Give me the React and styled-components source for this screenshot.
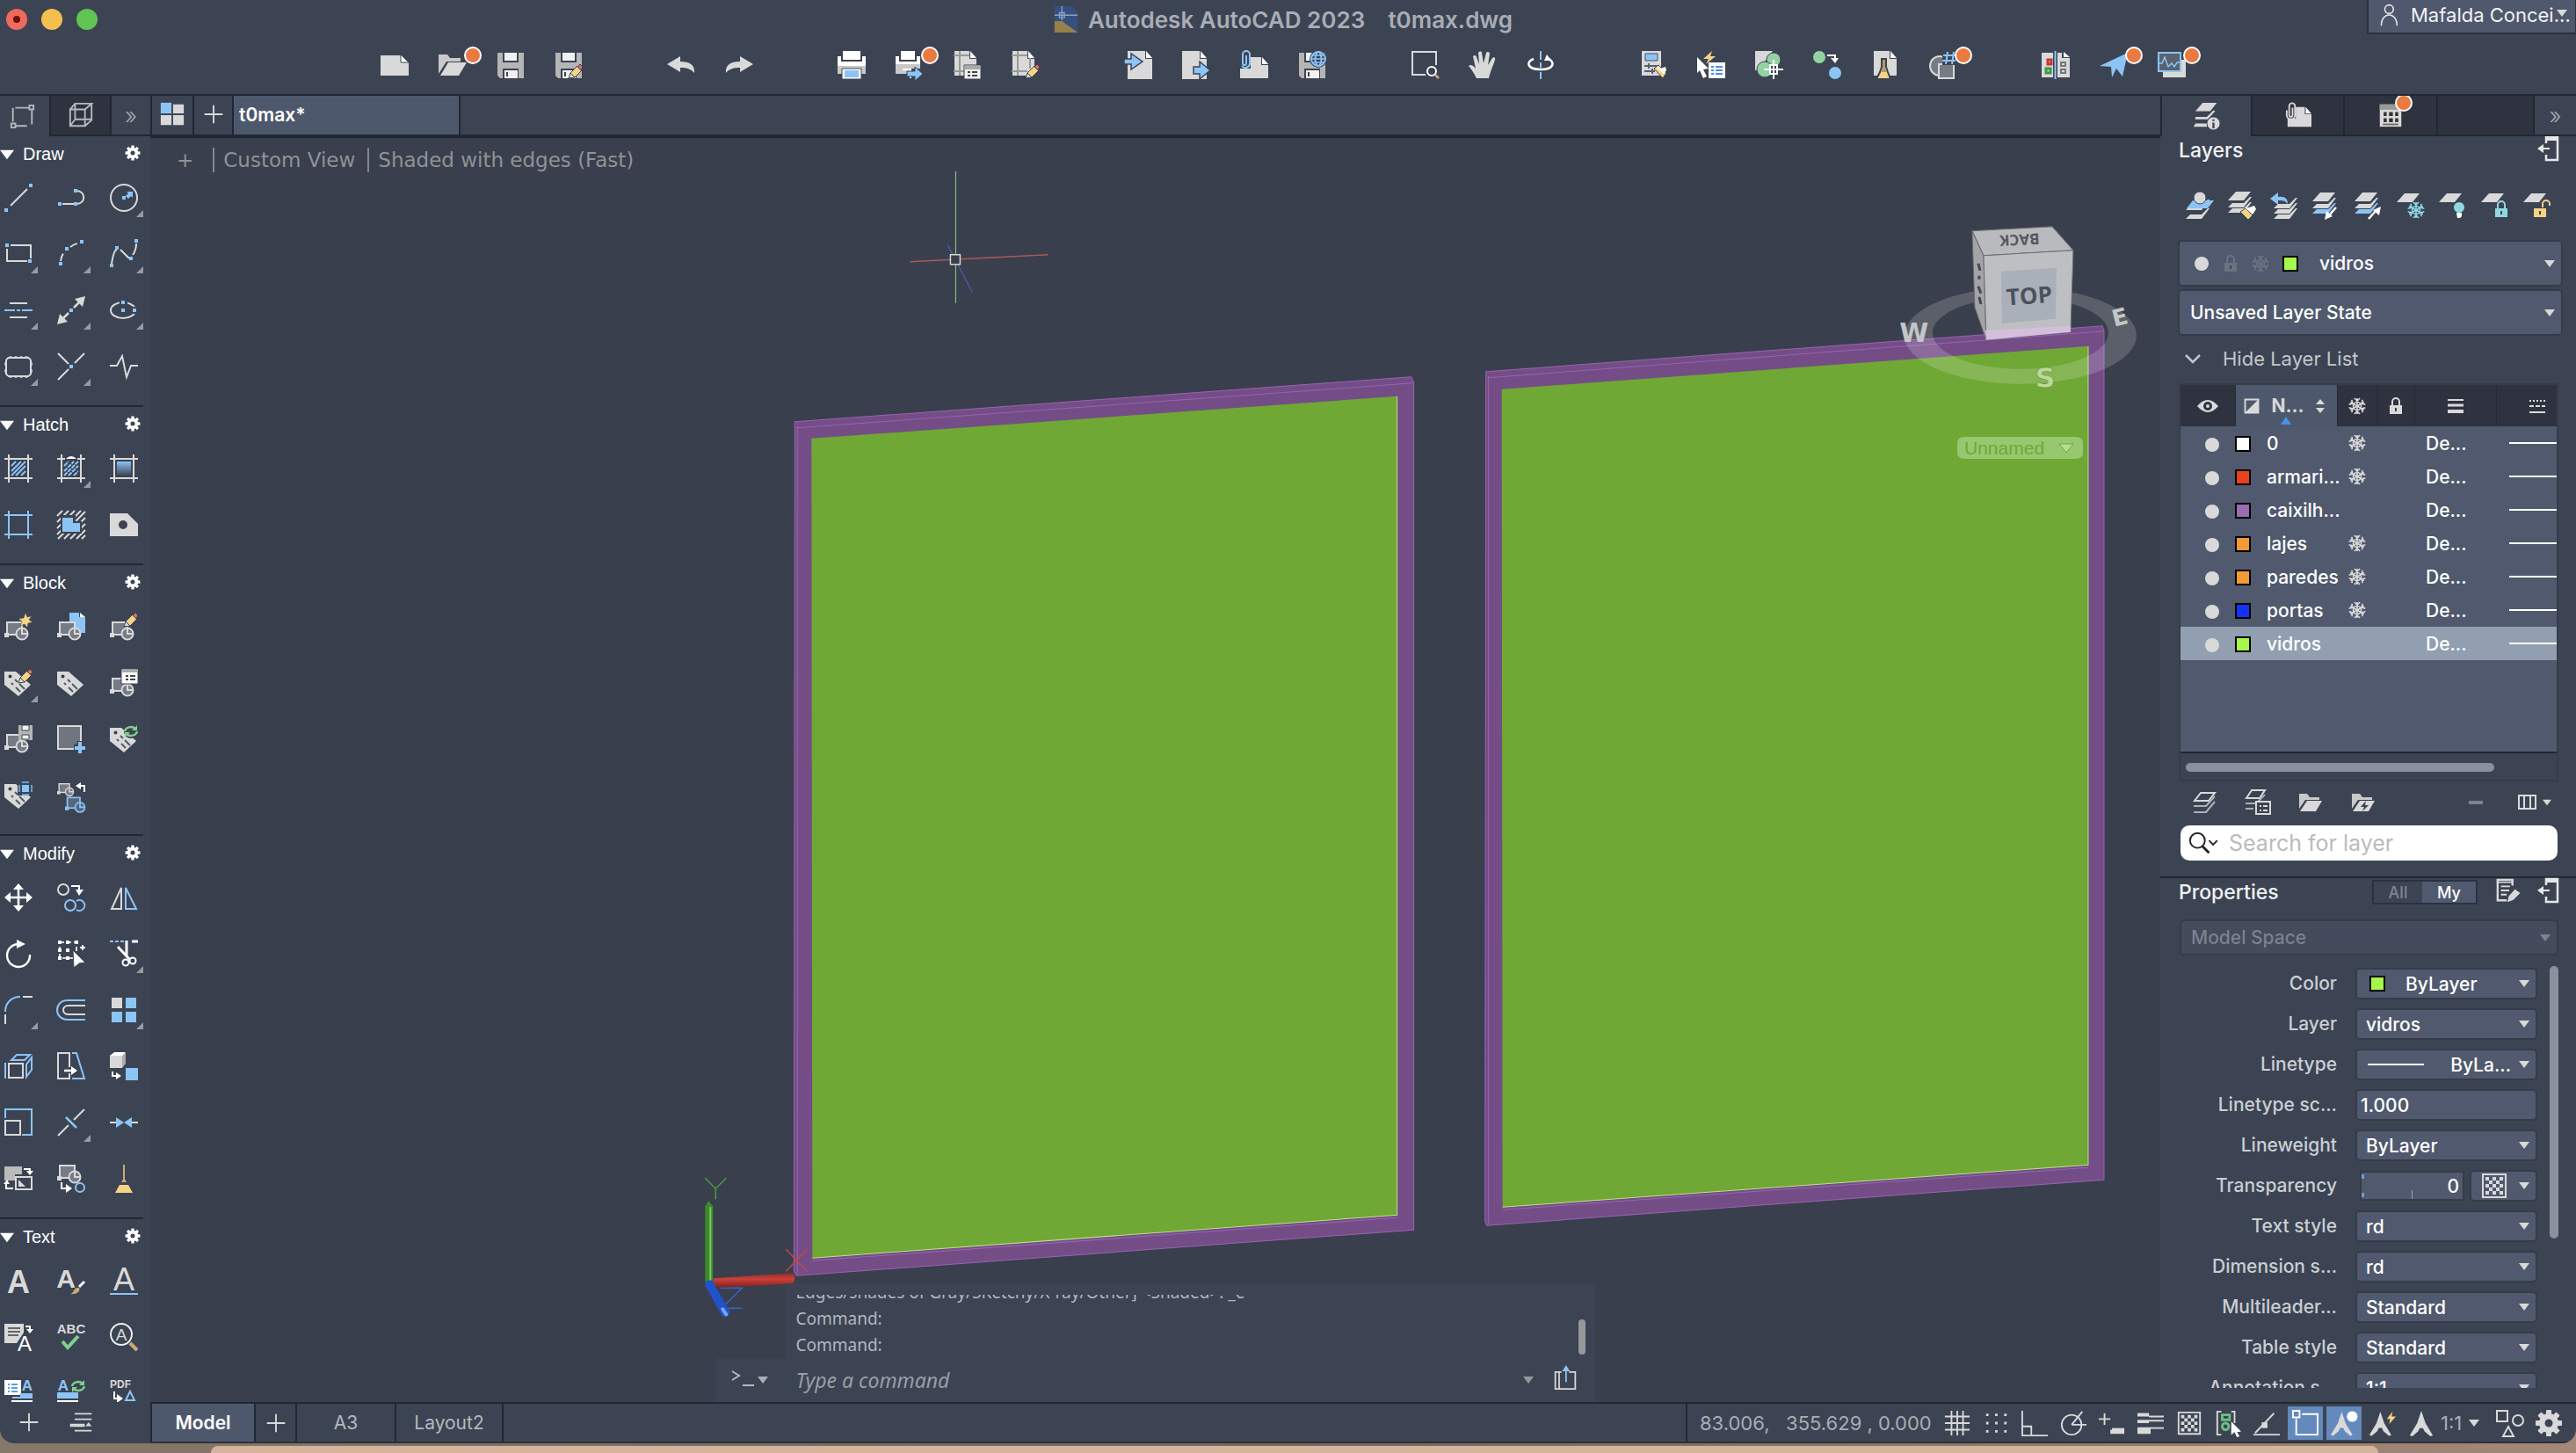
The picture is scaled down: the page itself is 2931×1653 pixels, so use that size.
import { useState } from "react";
import styled, { createGlobalStyle, css } from "styled-components";

const G = "#d9d9d9";
const B = "#8cc4f6";
const Y = "#f5d384";
const T = "#8fd8e0";
const GREEN = "#93d3a2";
const DIM = "#6b7280";
const BG = "#3c4453";
const LINE = "#202834";
const DARK = "#2f333f";
const FIELD = "#50596d";

const GlobalStyle = createGlobalStyle`
  * { box-sizing: border-box; }
  body {
    margin: 0;
    background: #7d6b5d;
    font-family: "Inter", "Liberation Sans", sans-serif;
    font-size: 21px;
    color: #f0f1f3;
  }
  button, select, input { font: inherit; color: inherit; margin: 0; }
  button { border: 0; padding: 0; background: none; cursor: pointer; }
  h1, h2, h3 { margin: 0; font-weight: 500; }
`;

const Desktop = styled.div`
  height: 100vh;
  display: flex;
  flex-direction: column;
  background: linear-gradient(90deg, #86786a, #7a675a 50%, #a38877);
`;

const Window = styled.div`
  flex: 1;
  min-height: 0;
  display: flex;
  flex-direction: column;
  background: ${BG};
  border-radius: 0 0 16px 16px;
  overflow: hidden;
`;

const DockEdge = styled.div`
  height: 8px;
  margin: 3px 225px 0 240px;
  border-radius: 16px 16px 0 0;
  background: #d5b49c;
`;

const TitleBar = styled.header`
  height: 44px;
  display: grid;
  grid-template-columns: 1fr auto 1fr;
  align-items: center;
`;

const Lights = styled.div`
  display: flex;
  gap: 16px;
  padding-left: 7px;
`;

const Light = styled.button`
  width: 24px;
  height: 24px;
  border-radius: 50%;
  display: grid;
  place-items: center;
  background: ${(props) => props.$color};

  &::after {
    content: "";
    width: 8px;
    height: 8px;
    border-radius: 50%;
    background: ${(props) => (props.$edited ? "#6d0f09" : "transparent")};
  }
`;

const Title = styled.h1`
  display: flex;
  align-items: center;
  gap: 10px;
  padding-right: 12px;
  font-size: 26px;
  font-weight: 600;
  white-space: pre;
  color: #a9adb5;
`;

const User = styled.button`
  position: relative;
  justify-self: end;
  align-self: start;
  height: 39px;
  width: 238px;
  padding: 0 2px 4px 12px;
  display: flex;
  align-items: center;
  gap: 14px;
  border: solid #2a313e;
  border-width: 0 1px 2px 2px;
  background: #4f586c;
  font-size: 22px;
  white-space: nowrap;
`;

const UserArrow = styled.span`
  position: absolute;
  top: 0;
  right: 9px;
`;

const Toolbar = styled.nav`
  height: 63px;
  padding: 0 12px 3px 0;
  display: flex;
  align-items: center;
  justify-content: center;
  gap: 62px;
`;

const ToolGroup = styled.div`
  display: flex;
`;

const ToolButton = styled.button`
  position: relative;
  width: 66px;
  height: 44px;
  display: grid;
  place-items: center;
`;

const Badge = styled.span`
  position: absolute;
  top: ${(props) => props.$top}px;
  left: 50%;
  margin-left: ${(props) => props.$shift}px;
  width: 20px;
  height: 20px;
  border-radius: 50%;
  border: 2px solid #fff;
  background: #ea7a41;
`;

const Body = styled.div`
  flex: 1;
  min-height: 0;
  display: flex;
  border-top: 2px solid ${LINE};
`;

const Rest = styled.div`
  flex: 1;
  min-width: 0;
  display: flex;
  flex-direction: column;
`;

const Work = styled.main`
  flex: 1;
  min-height: 0;
  display: flex;
`;

const ToolSets = styled.aside`
  width: 171px;
  flex: none;
  display: flex;
  flex-direction: column;
`;

const Tabs = styled.div`
  height: 46px;
  flex: none;
  display: flex;
`;

const Tab = styled.button`
  position: relative;
  display: grid;
  place-items: center;
  width: ${(props) => props.$width}px;
  padding-right: ${(props) => (props.$first ? 6 : 0)}px;
  border-left: ${(props) => (props.$first ? 0 : 2)}px solid ${LINE};
  border-bottom: ${(props) => (props.$active ? 0 : 2)}px solid ${LINE};
  background: ${(props) => (props.$dark ? DARK : "transparent")};
  font-size: 26px;
  font-weight: 300;
  color: #a4a8b0;
`;

const SetList = styled.div`
  flex: 1;
  min-height: 0;
  overflow: hidden;
`;

const SetSection = styled.section`
  width: 163px;
  padding-bottom: 12px;
  border-bottom: 2px solid ${LINE};
`;

const SetHeader = styled.div`
  height: 38px;
  padding: 3px 3px 0 0;
  display: flex;
  align-items: center;

  h2 {
    flex: 1;
    padding-left: 10px;
    font: 400 20px "Liberation Sans", sans-serif;
    color: #fff;
  }
`;

const SetGrid = styled.div`
  padding-left: 5px;
  display: grid;
  grid-template-columns: repeat(3, 32px);
  grid-auto-rows: 64px;
  column-gap: 28px;
`;

const SetTool = styled.button`
  position: relative;
  display: grid;
  place-items: center;

  ${(props) =>
    props.$more &&
    css`
      &::after {
        content: "";
        position: absolute;
        right: -6px;
        bottom: 10px;
        border: 4px solid #989ba1;
        border-top-color: transparent;
        border-left-color: transparent;
      }
    `}
`;

const SetFooter = styled.div`
  height: 47px;
  padding: 4px 0 0 18px;
  display: flex;
  align-items: center;
  gap: 30px;
`;

const Center = styled.section`
  flex: 1;
  min-width: 0;
  display: flex;
  flex-direction: column;
`;

const FileTabs = styled.div`
  height: 48px;
  flex: none;
  display: flex;
  border-bottom: 4px solid ${LINE};
`;

const FileTab = styled.button`
  width: ${(props) => props.$width}px;
  padding: 0 0 2px ${(props) => (props.$active ? 6 : 0)}px;
  display: flex;
  align-items: center;
  justify-content: ${(props) => (props.$active ? "flex-start" : "center")};
  border-right: 2px solid ${LINE};
  border-left: ${(props) => (props.$first ? 2 : 0)}px solid ${LINE};
  background: ${(props) => (props.$active ? "#4e586d" : "transparent")};
  font-weight: 600;
  color: #fff;
`;

const Viewport = styled.div`
  position: relative;
  flex: 1;
  min-height: 0;
  display: flex;
  flex-direction: column;
  justify-content: space-between;
  background: #393f4c;
`;

const Drawing = styled.svg`
  position: absolute;
  inset: 0;
  width: 100%;
  height: 100%;
`;

const ViewControls = styled.div`
  position: relative;
  padding: 8px 0 0 30px;
  display: flex;
  align-items: center;
  font: 23px "DejaVu Sans", sans-serif;
  color: #909296;

  button { height: 34px; padding-right: 14px; }
  button + button {
    height: 28px;
    padding-left: 10px;
    border-left: 2px solid #83868b;
  }
  button:first-child { padding-right: 22px; }
`;

const ViewName = styled.button`
  position: absolute;
  top: 340px;
  right: 88px;
  width: 143px;
  height: 25px;
  padding: 0 10px 0 8px;
  display: flex;
  align-items: center;
  justify-content: space-between;
  border-radius: 7px;
  background: #97c76f;
  font: 21px "Liberation Sans", sans-serif;
  color: #6fa838;
`;

const CommandPanel = styled.div`
  position: relative;
  align-self: center;
  width: 1000px;
  font-family: "Noto Sans", sans-serif;
  color: #b3b7bf;
`;

const History = styled.div`
  height: 85px;
  margin-left: 80px;
  padding: 13px 11px 0 11px;
  display: flex;
  justify-content: space-between;
  background: ${BG};
`;

const Log = styled.div`
  height: 72px;
  overflow: hidden;
  display: flex;
  flex-direction: column;
  justify-content: flex-end;
  font-size: 19px;
  line-height: 30px;
`;

const Scroll = styled.span`
  width: 8px;
  height: 40px;
  margin-top: 28px;
  border-radius: 4px;
  background: #96989c;
`;

const CommandLine = styled.div`
  height: 50px;
  padding: 0 20px 0 17px;
  display: flex;
  align-items: center;
  background: ${BG};

  input {
    flex: 1;
    height: 40px;
    border: 0;
    padding: 0 0 0 32px;
    background: none;
    outline: 0;
    font-size: 23px;
    font-style: italic;
  }
  input::placeholder { color: #9a9ea6; opacity: 1; }
  input + svg { margin-right: 22px; }
`;

const RightPanel = styled.aside`
  width: 473px;
  flex: none;
  display: flex;
  flex-direction: column;
  overflow: hidden;
`;

const PanelHead = styled.div`
  height: 32px;
  padding: 0 16px 0 21px;
  display: flex;
  align-items: center;

  h2 { flex: 1; font-size: 23px; }
  button + button { margin-left: 14px; }
`;

const LayerTools = styled.div`
  height: 86px;
  padding: 13px 0 0 21px;
  display: flex;
  align-items: center;

  button { width: 48px; height: 40px; }
`;

const Field = styled.div`
  height: ${(props) => props.$height || 36}px;
  padding: 0 7px 0 ${(props) => props.$pad || 10}px;
  display: flex;
  align-items: center;
  gap: ${(props) => props.$gap || 0}px;
  border: 2px solid #343c49;
  border-radius: 5px;
  background: ${(props) => (props.$off ? "#434b5c" : FIELD)};
  color: ${(props) => (props.$off ? "#7b8290" : "#fff")};
  font-weight: 500;

  select, input {
    flex: 1;
    min-width: 0;
    width: 0;
    padding: 0 0 0 ${(props) => props.$inset || 0}px;
    border: 0;
    outline: 0;
    background: none;
    appearance: none;
    opacity: 1;
    text-align: ${(props) => (props.$end ? "right" : "left")};
    color: inherit;
  }
`;

// thumb sits at the left edge, tick marks the middle of the range
const SliderField = styled(Field)`
  margin: 1px 0 1px 5px;
  height: 34px;
  padding: 0 4px;
  border-radius: 0;
  background:
    linear-gradient(#9aa0ab, #9aa0ab) 50% 20px / 1px 10px no-repeat,
    linear-gradient(#6f9ade, #6f9ade) 0 2px / 3px 5px no-repeat,
    linear-gradient(#6f9ade, #6f9ade) 0 23px / 3px 5px no-repeat,
    ${FIELD};
`;

const LayerFields = styled.div`
  padding: 0 15px 0 20px;
  display: flex;
  flex-direction: column;
  gap: 3px;
`;

const HideList = styled.button`
  height: 54px;
  padding: 0 0 2px 21px;
  display: flex;
  align-items: center;
  gap: 18px;
  font-size: 22px;
  color: #c3c6cb;
`;

const LayerFrame = styled.div`
  margin: 0 20px 0 21px;
  border: 2px solid #353d4a;
`;

const TableArea = styled.div`
  height: 419px;
  background: ${FIELD};
  border-bottom: 2px solid ${LINE};
  overflow: hidden;
`;

const LayerTable = styled.table`
  width: 100%;
  table-layout: fixed;
  border-collapse: collapse;
  font-weight: 500;
  color: #fff;

  th {
    height: 47px;
    padding: 0;
    background: ${DARK};
    border-right: 1px solid #262b36;
  }
  th:nth-child(2) { background: #4e586c; }
  th:last-child { text-align: right; border: 0; }
  th:last-child svg { margin-right: 14px; }
  td {
    height: 38px;
    padding: 0;
    white-space: nowrap;
  }
  td:nth-child(5) { padding-left: 13px; }
  svg { display: inline-block; vertical-align: middle; }
`;

const NameHead = styled.div`
  position: relative;
  height: 47px;
  padding: 0 9px 0 3px;
  display: flex;
  align-items: center;
  justify-content: space-between;
  color: #d9d9d9;

  &::after {
    content: "";
    position: absolute;
    bottom: 2px;
    left: 50%;
    margin-left: -6px;
    border: 6px solid transparent;
    border-bottom: 9px solid #4a90e8;
    border-top: 0;
  }
`;

const LayerRow = styled.tr`
  background: ${(props) => (props.$selected ? "#919fb0" : "transparent")};
`;

const Dot = styled.span`
  display: inline-block;
  flex: none;
  width: 16px;
  height: 16px;
  margin-left: ${(props) => props.$indent || 0}px;
  vertical-align: middle;
  border-radius: 50%;
  background: ${G};
`;

const Swatch = styled.span`
  display: inline-block;
  flex: none;
  width: 18px;
  height: 18px;
  border: 2px solid #000;
  vertical-align: middle;
  background: ${(props) => props.$color};
`;

const LayerName = styled.span`
  display: inline-block;
  margin-left: 18px;
  vertical-align: middle;
`;

const LineSample = styled.span`
  display: block;
  flex: none;
  height: 2px;
  width: ${(props) => props.$width};
  margin-left: ${(props) => props.$indent || 0}px;
  background: #fff;
`;

const HScroll = styled.div`
  height: 30px;
  padding: 11px 71px 0 6px;

  span {
    display: block;
    height: 10px;
    border-radius: 5px;
    background: #8b909c;
  }
`;

const LayerActions = styled.div`
  height: 50px;
  padding: 0 28px 2px 35px;
  display: flex;
  align-items: center;
  gap: 28px;

  button {
    height: 32px;
    display: flex;
    align-items: center;
    gap: 4px;
  }
  button:nth-child(4) { margin-right: auto; }
`;

const Search = styled.label`
  height: 40px;
  margin: 0 21px 0 23px;
  padding: 0 9px;
  display: flex;
  align-items: center;
  gap: 6px;
  border-radius: 10px;
  background: #fff;
  color: #222;

  input {
    flex: 1;
    min-width: 0;
    border: 0;
    outline: 0;
    background: none;
    font-size: 25px;
  }
  input::placeholder { color: #bbb; opacity: 1; }
`;

const Properties = styled.section`
  flex: 1;
  min-height: 0;
  margin-top: 18px;
  border-top: 2px solid ${LINE};
  display: flex;
  flex-direction: column;
`;

const Segmented = styled.div`
  display: flex;
  margin-right: 20px;
  border: 2px solid #2b323e;
`;

const Segment = styled.button`
  width: ${(props) => (props.$on ? 61 : 55)}px;
  height: 24px;
  font-size: 18px;
  font-weight: 500;
  background: ${(props) => (props.$on ? "#4f5a70" : "transparent")};
  color: ${(props) => (props.$on ? "#fff" : "#808692")};

  && { margin: 0; }
`;

const SpaceField = styled.div`
  padding: 15px 20px 0 22px;
`;

const PropScroll = styled.div`
  flex: 1;
  min-height: 0;
  margin: 12px 20px 16px 0;
  display: flex;
  justify-content: space-between;
  overflow: hidden;
`;

const PropGrid = styled.div`
  flex: 1;
  padding: 2px 14px 0 50px;
  display: grid;
  grid-template-columns: 151px 1fr;
  grid-auto-rows: 36px;
  row-gap: 10px;
  column-gap: 21px;
  align-content: start;
`;

const PropLabel = styled.label`
  line-height: 36px;
  text-align: right;
  white-space: nowrap;
  font-weight: 500;
  color: #cbced4;
`;

const Pair = styled.div`
  display: grid;
  grid-template-columns: 1fr 77px;
  gap: 6px;
`;

const VScroll = styled.span`
  width: 10px;
  height: 310px;
  border-radius: 5px;
  background: #8b909c;
`;

const BottomBar = styled.footer`
  height: 47px;
  flex: none;
  display: flex;
  justify-content: space-between;
  border-top: 2px solid ${LINE};
  border-bottom: 2px solid #2a313d;
`;

const LayoutTabs = styled.div`
  display: flex;
`;

const LayoutTab = styled.button`
  width: ${(props) => props.$width}px;
  border-right: 2px solid ${LINE};
  border-left: ${(props) => (props.$on ? 2 : 0)}px solid ${LINE};
  background: ${(props) => (props.$on ? "#4e586d" : "transparent")};
  font-weight: ${(props) => (props.$on ? 600 : 400)};
  color: ${(props) => (props.$on ? "#fff" : "#b4b8bf")};
  display: grid;
  place-items: center;
`;

const Status = styled.div`
  width: 1013px;
  padding: 0 9px 0 14px;
  display: flex;
  align-items: center;
  border-left: 2px solid ${LINE};
  color: #a9adb4;
`;

const Coords = styled.output`
  flex: 1;
  font-size: 22px;
  white-space: pre;
`;

const StatusButton = styled.button`
  width: 40px;
  height: 38px;
  margin: 0 2px;
  display: grid;
  place-items: center;
  background: ${(props) => (props.$on ? "#6389bd" : "transparent")};
`;

const ScaleButton = styled.button`
  width: 55px;
  height: 38px;
  margin-right: 2px;
  display: flex;
  align-items: center;
  gap: 8px;
  font-size: 22px;
`;

// shared icon parts
const stroke = (color, width = 2) => ({ fill: "none", stroke: color, strokeWidth: width });

const Block = ({ c = G, fill = "#767b86" }) => (
  <g {...stroke(c)} fill={fill}>
    <rect x="3" y="11" width="17" height="14" />
    <rect x="1" y="24" width="3" height="3" fill={c} />
    <circle cx="20" cy="24" r="6.5" />
    <path d="M20 18v6h6" />
  </g>
);

const Tag = () => (
  <g>
    <path d="M0 3h13l17 15-14 13L0 18z" fill={G} />
    <circle cx="6.500" cy="8.500" r="2" fill="#3a404c" />
    <path d="M12 12l3 3m2 2l6 6M8 16l2 2m3 3l5 5" {...stroke("#555a64")} />
  </g>
);

const Pencil = ({ x = 0, y = 0 }) => (
  <g transform={`translate(${x} ${y})`} stroke={BG}>
    <path d="M1 16l2-6 5 5z" fill={G} />
    <path d="M3 10L11 2l5 5-8 8z" fill={Y} />
    <path d="M11 3l3-3 3 3-2 4z" fill="#dd6b68" />
  </g>
);

const Cycle = ({ x = 0, y = 0 }) => (
  <g transform={`translate(${x} ${y})`}>
    <path d="M1 7a7 6 0 0 1 12-3M15 7a7 6 0 0 1-12 3" {...stroke("#7fd08f", 2.4)} />
    <path d="M15 0v6h-6zM1 14V8h6z" fill="#7fd08f" />
  </g>
);

const Floppy = ({ children }) => (
  <g>
    <path d="M1 2h30v29H4l-3-3z" fill="#b5b5b5" />
    <path d="M7 2h18v11H7z" fill={BG} />
    <path d="M9 2h14v9H9z" fill="#f1f1f1" />
    <path d="M7 20h18v11H7z" fill={BG} />
    <path d="M9 22h15v9H9z" fill="#f1f1f1" />
    <path d="M11 24h2v5h-2z" fill="#444" />
    {children}
  </g>
);

const Page = ({ x = 5, y = 0, w = 25, h = 32, c = G }) => (
  <g>
    <path d={`M${x} ${y}h${w - 8}v9h8v${h - 9}h${-w}z`} fill={c} />
    <path d={`M${x + w - 7} ${y}l7 8h-7z`} fill="#fff" />
  </g>
);

const Flake = ({ c = G, x = 16, y = 16, r = 9 }) => (
  <g transform={`translate(${x} ${y})`} {...stroke(c, 1.6)}>
    {[0, 60, 120].map((a) => (
      <g key={a} transform={`rotate(${a})`}>
        <path d={`M0 ${-r}V${r}M${-r * 0.35} ${-r}L0 ${-r * 0.65}L${r * 0.35} ${-r}M${-r * 0.35} ${r}L0 ${r * 0.65}L${r * 0.35} ${r}`} />
      </g>
    ))}
    <circle r={r * 0.5} />
  </g>
);

const Sheet = ({ y, c = G, x = 0 }) => (
  <path d={`M${x} ${y + 10}L${x + 9} ${y}h17l-8 10z`} fill={c} />
);

const Edge = ({ y, c = G, x = 0 }) => (
  <path d={`M${x} ${y + 6}l5-5h13l7-7h2l-9 12z`} fill={c} />
);

const Lock = ({ c = G, x = 16, y = 16, open }) => (
  <g transform={`translate(${x} ${y})`}>
    <path d={open ? "M3-2v-4a4 4 0 0 1 8 0v2" : "M-4-1v-4a4 4 0 0 1 8 0v4"} {...stroke(c)} />
    <path d="M-7-1H7V9H-7z" fill={c} />
    <path d="M-1 2h2v4h-2z" fill={BG} />
  </g>
);

const Gear = ({ c = G }) => (
  <g>
    {[0, 45, 90, 135].map((a) => (
      <rect key={a} x="13" y="1" width="6" height="30" rx="1" fill={c} transform={`rotate(${a} 16 16)`} />
    ))}
    <circle cx="16" cy="16" r="11" fill={c} />
    <circle cx="16" cy="16" r="4.500" fill={BG} />
  </g>
);

const HatchFrame = ({ c = G }) => (
  <path d="M5 0v32M27 0v32M0 5h32M0 27h32" {...stroke(c)} />
);

const Pts = ({ at }) => at.map(([x, y]) => (
  <rect key={`${x} ${y}`} x={x - 2} y={y - 2} width="4" height="4" fill={B} />
));

const Letter = ({ x, y, size, c = G, weight = 700, children }) => (
  <text x={x} y={y} fontSize={size} fontWeight={weight} fill={c} textAnchor="middle" fontFamily="Liberation Sans, sans-serif">
    {children}
  </text>
);

const Compass = () => (
  <path d="M16 0l5 15 9 15-3 1-7-6-2-4h-4l-2 4-7 6-3-1 9-15z" fill={G} />
);

const icons = {
  file: <><path d="M0 5h22l10 8v15H0z" fill={G} /><path d="M23 4v9h9z" fill="#fff" stroke={BG} /></>,
  open: <><path d="M0 4h10l3 4h12v4H9L0 26z" fill="#c9c9c9" /><path d="M2 28l9-15h21l-9 15z" fill={G} /></>,
  save: <Floppy />,
  saveAs: <Floppy><Pencil x={15} y={15} /></Floppy>,
  undo: <path d="M0 15L15 6v6c11 0 17 4 16 13-4-5-9-6-16-6v5z" fill={G} />,
  redo: <path d="M32 15L17 6v6C6 12 0 16 1 25c4-5 9-6 16-6v5z" fill={G} />,
  print: <><path d="M6 0h20v10H6z" fill="#fff" /><path d="M0 6h4v6h24V6h4v11H0z" fill="#fff" /><path d="M0 17h32v9H0z" fill="#c9c9c9" /><path d="M5 20h22v12H5z" fill="#fff" stroke={BG} /><path d="M8 22h16v8H8z" fill={B} /></>,
  batch: <><path d="M6 0h16v10H6z" fill="#fff" /><path d="M0 6h4v6h20V6h4v9H0z" fill="#fff" /><path d="M0 15h28v5H18v6H0z" fill="#c9c9c9" /><path d="M8 21h9v10" {...stroke("#fff")} /><path d="M13 23h9v-5l9 8-9 8v-5h-9z" fill={B} stroke={BG} /></>,
  pageSetup: <><Page x={1} w={25} h={28} /><path d="M7 0v28M0 5h18M0 23h14" {...stroke("#999")} /><path d="M12 16h19v16H12z" fill="#f1f1f1" stroke={BG} /><path d="M13 17h17v4H13z" fill="#aaa" /><path d="M16 24h3m2 0h6m-11 4h3m2 0h6" {...stroke("#444")} /></>,
  pageEdit: <><Page x={1} w={25} h={28} /><path d="M7 0v28M21 8v12M0 5h18M0 23h18" {...stroke("#999")} /><Pencil x={15} y={15} /></>,
  importFile: <><Page x={4} w={28} /><path d="M0 9h8V3l13 9-13 9v-6H0z" fill={B} stroke={BG} strokeWidth="1.500" /></>,
  exportFile: <><Page x={0} w={28} /><path d="M13 18h7v-6l12 10-12 10v-6h-7z" fill={B} stroke={BG} strokeWidth="1.500" /></>,
  attach: <><Page x={0} y={7} w={32} h={24} /><path d="M0 0h12v20H0z" fill={BG} /><path d="M7 5v9a2 2 0 0 1-4 0V4a4 4 0 0 1 8 0v10a5 5 0 0 1-9 3" {...stroke(B)} /></>,
  saveWeb: <><Floppy /><circle cx="23" cy="9" r="10" fill={BG} /><circle cx="23" cy="9" r="8" {...stroke(B)} /><ellipse cx="23" cy="9" rx="3.500" ry="8" {...stroke(B)} /><path d="M15 9h16M16 5h14M16 13h14" {...stroke(B, 1.5)} /></>,
  zoomWin: <><path d="M17 27H2V1h27v15" {...stroke(G)} /><circle cx="24" cy="23" r="5" {...stroke("#fff")} /><path d="M28 27l4 4" {...stroke("#c8ab78", 2.5)} /></>,
  pan: <path d="M9 31C6 25 4 22 0 17c2-2 5-1 8 3L5 6c2-2 4-1 4 1l3 8-1-13c1-2 4-2 4 0l2 12 3-12c1-2 4-1 4 1l-2 13 5-8c2-2 4 0 3 2-2 7-5 12-7 21z" fill={G} />,
  orbit: <><path d="M16 0v10m0 3v6m0 5v8" {...stroke(B)} /><path d="M23 8c10 4 9 13-7 13S-1 12 8 9" {...stroke("#fff", 2.6)} /><path d="M20 11l3-7 5 7z" fill="#fff" /></>,
  props: <><path d="M3 0h22v28H3z" fill={G} /><path d="M7 3h14v8H7z" fill={B} stroke="#48505e" /><path d="M6 17h15M6 23h12M11 14v6M15 20v6" {...stroke("#59606c")} /><path d="M17 20l5-4 9 9-4 6z" fill={Y} stroke={BG} /><path d="M21 17l3 3 6-2 1 4-3 4-8-7z" fill="#fff" /></>,
  quick: <><path d="M0 7l13 13-6 1 4 8-4 2-4-9-3 3z" fill="#fff" /><path d="M17 0L7 9h6l-3 6 11-9h-6z" fill={Y} /><path d="M13 13h19v18H13z" fill="#fff" /><path d="M16 18h3m2 0h8m-13 4h3m2 0h8m-13 4h3m2 0h8" {...stroke("#4d8fd8")} /></>,
  quickCalc: <><path d="M0 0h20L4 22H0z" fill={G} /><circle cx="21" cy="10" r="8" fill={GREEN} stroke={BG} /><circle cx="11" cy="21" r="9" fill={GREEN} stroke={BG} /><path d="M17 16h8v10h-8z" fill={BG} /><path d="M21 10v22M10 21h22M17 16h8v10h-8z" {...stroke("#fff")} /></>,
  convert: <><circle cx="7" cy="7" r="7" fill={GREEN} /><circle cx="25" cy="25" r="7" fill={B} /><path d="M16 5h9v6" {...stroke("#fff")} /><path d="M20 8h9l-4 6z" fill="#fff" /></>,
  purge: <><Page x={3} w={26} h={28} /><path d="M6 32l4-8 2-6V9h5v9l2 6 3 8z" fill={Y} stroke={BG} strokeWidth="2" /><path d="M13 10h3v9l2 5h-7l2-5z" fill="#b89867" /></>,
  count: <><circle cx="12" cy="17" r="11" fill="#767b86" stroke={G} strokeWidth="2" /><path d="M11 15h17v16H11z" fill="#767b86" stroke={G} strokeWidth="2" /><path d="M15 0h17v16H15z" fill={BG} /><path d="M21 1l-2 14M28 1l-2 14M16 5h15M15 11h15" {...stroke(B)} /></>,
  compare: <><path d="M0 2h13v28H0zM18 2h5v6h9v22H18z" fill={G} /><path d="M25 1l7 6h-7z" fill="#fff" /><path d="M15.500 0v32" {...stroke(B)} /><path d="M7 10h4v5H7z" {...stroke("#c33", 3)} /><path d="M5 20h5v5H5z" {...stroke("#3c9a3c", 3)} /><path d="M22 13h5v4h-5zM22 21h5v4h-5z" {...stroke("#777")} /></>,
  share: <path d="M0 17L32 2l-6 27-7-9-5 10-1-12zM14 18L30 4 18 19z" fill={B} />,
  activity: <><path d="M6 10h26v20H6z" fill={G} /><path d="M1 2h25v21H1z" fill="#5a6272" stroke={B} strokeWidth="2" /><path d="M1 14h4l3-7 4 11 4-4 3 4 3-5h4" {...stroke(B, 1.5)} /></>,

  line: <><path d="M7 25L26 6" {...stroke(G)} /><Pts at={[[2, 30], [30, 2]]} /></>,
  pline: <><path d="M6 23h13M22 8c11 0 11 15 0 15" {...stroke(G)} /><Pts at={[[3, 23], [21, 23], [21, 8]]} /></>,
  circle: <><circle cx="16" cy="16" r="15" {...stroke(G)} /><Pts at={[[16, 16]]} /><path d="M18 14l3-3-2-2h7v7l-2-2-3 3z" fill={B} /></>,
  rect: <><path d="M7 6h23v15M26 24H3V10" {...stroke(G)} /><Pts at={[[3, 6], [29, 24]]} /></>,
  arc: <><path d="M4 24c1-6 2-8 6-12m5-4c4-3 6-4 10-4" {...stroke(G)} strokeDasharray="9 5" /><Pts at={[[4, 27], [11, 10], [28, 2]]} /></>,
  spline: <><path d="M2 27C4 14 6 11 8 11m4 0l10 10m4-4c3-4 4-8 4-13" {...stroke(G)} /><Pts at={[[2, 29], [8, 9], [24, 21], [30, 1]]} /></>,
  multi: <><path d="M6 8h20M6 24h20" {...stroke(G)} /><path d="M0 16h32" {...stroke(B)} strokeDasharray="12 2 4 2" /></>,
  ray: <><path d="M4 28l9-9m6-6l9-9" {...stroke(G, 2.5)} /><path d="M32 0l-3 12-9-9zM0 32l3-12 9 9z" fill={G} /><Pts at={[[16, 16]]} /></>,
  ellipse: <><ellipse cx="15" cy="16" rx="14" ry="9" {...stroke(G)} /><path d="M11 4h9v6h-9zM25 12h6v8h-6z" fill={BG} /><Pts at={[[15, 7], [15, 16], [28, 16]]} /></>,
  cloud: <><rect x="2" y="6" width="28" height="21" rx="4" {...stroke(G)} /><path d="M4 6q3-3 6 0q3-3 6 0q3-3 6 0q3-3 6 0M4 27q3 3 6 0q3 3 6 0q3 3 6 0q3 3 6 0M2 9q-3 4 0 8q-3 4 0 8M30 9q3 4 0 8q3 4 0 8" {...stroke(G, 1)} /></>,
  xline: <><path d="M1 1l12 12M31 1L20 12M1 31l12-12" {...stroke(G)} /><Pts at={[[16, 16]]} /></>,
  breakline: <path d="M0 15h8L14 4l5 24 5-13h8" {...stroke(G)} />,
  hatch: <><HatchFrame /><path d="M8 13l5-5M8 19L19 8M8 24L24 8M13 24l11-11M19 24l5-5" {...stroke(B)} /></>,
  hatchB: <><HatchFrame /><path d="M8 13l5-5M8 19L19 8M8 24L24 8M13 24l11-11M19 24l5-5" {...stroke(B)} strokeDasharray="5 1" /><path d="M9 1h14v5H9z" fill={BG} /><path d="M10 5q6-6 12 0z" fill="#fff" /></>,
  gradient: <><HatchFrame /><path d="M8 8h16v16H8z" fill="url(#fade)" /></>,
  boundary: <HatchFrame c={B} />,
  region: <><path d="M0 6l6-6M0 13L13 0M0 20L20 0M0 27L27 0M1 32L32 1M8 32L32 8M15 32l17-17M22 32l10-10M28 32l4-4" {...stroke(G)} /><path d="M4 5h17v7h7v14H4z" fill={BG} /><path d="M6 8h12v6h8v10H6z" fill={B} /></>,
  wipeout: <><path d="M0 3h20l12 12v14H0z" fill={G} /><circle cx="15" cy="16" r="5" fill={BG} /></>,
  blockNew: <><Block /><path d="M24 0l2 5 5-1-3 4 4 3-5 1-1 5-3-4-5 2 2-5-4-3 6-1z" fill={Y} stroke={BG} strokeWidth=".5" /></>,
  blockInsert: <><path d="M14 0h11v5h7v18H14z" fill={B} /><path d="M26 0l6 5h-6z" fill="#fff" /><Block /></>,
  blockEdit: <><Block /><Pencil x={15} /></>,
  tagEdit: <><Tag /><Pencil x={15} /></>,
  tag: <Tag />,
  blockProps: <><Block /><path d="M13 0h19v17H13z" fill="#fff" stroke={BG} /><path d="M14 1h18v3H14z" fill="#aaa" /><path d="M18 8h3m2 0h6m-11 4h3m2 0h6" {...stroke("#444")} /></>,
  blockSave: <><Block /><path d="M16 0h16v17H16z" fill="#b5b5b5" /><path d="M20 0h8v6h-8zM20 11h8v5h-8z" fill="#f1f1f1" stroke={BG} /></>,
  baseNew: <><path d="M1 1h26v26H1z" fill="#70757f" stroke={G} strokeWidth="2" /><path d="M26 18v14M19 25h14" {...stroke(BG, 7)} /><path d="M26 19v13M20 26h12" {...stroke(B, 4)} /></>,
  tagSync: <><Tag /><circle cx="24" cy="7" r="8" fill={BG} /><Cycle x={16} /></>,
  tagPlace: <><Tag /><path d="M15 0h17v16H15z" fill={BG} /><path d="M20 4h8v8h-8z" fill={B} /><path d="M20 1h8M20 15h8M17 4v8M31 4v8" {...stroke("#5e9fdc")} /></>,
  blockSwap: <><g transform="translate(0 -5) scale(.7)"><Block /></g><g transform="translate(9 9) scale(.85)"><Block c={B} fill="#55667f" /></g><path d="M31 12V5h-6" {...stroke("#fff")} /><path d="M21 5l6-4v8z" fill="#fff" /></>,
  move: <><path d="M16 4v24M4 16h24" {...stroke("#fff", 2.5)} /><path d="M16 0l6 7H10zM16 32l6-7H10zM0 16l7-6v12zM32 16l-7-6v12z" fill="#fff" /></>,
  copy: <><circle cx="7" cy="7" r="6" {...stroke(G)} /><circle cx="15" cy="25" r="6" {...stroke(B)} /><path d="M22 20a6 6 0 1 1 0 10" {...stroke(B)} /><path d="M16 3h9v5" {...stroke("#fff")} /><path d="M21 7h9l-5 7z" fill="#fff" /></>,
  mirror: <><path d="M13 5v24H2z" {...stroke(G)} /><path d="M18 5v24h12z" {...stroke(B)} /></>,
  rotate: <><path d="M17 5a13 13 0 1 0 12 12" {...stroke("#fff", 2.4)} /><path d="M14 0l10 5-10 5z" fill="#fff" /></>,
  scale: <><path d="M3 3h19v18H3z" {...stroke(G)} strokeDasharray="5 3" /><path d="M1 1h4v4H1zM10 1h4v4h-4zM20 1h4v4h-4zM1 10h4v4H1zM1 19h4v4H1zM10 10h4v4h-4zM10 19h4v4h-4z" fill="#fff" /><path d="M18 12l14 14-7 1-6 5z" fill="#fff" stroke={BG} /><path d="M26 9h6M29 6v6" {...stroke("#fff")} /></>,
  trim: <><path d="M0 2h17" {...stroke(B)} strokeDasharray="4 2" /><path d="M19 1v17M9 8l14 15M25 2h7" {...stroke("#fff", 3)} /><circle cx="18" cy="26" r="3.500" {...stroke("#fff")} /><circle cx="26" cy="24" r="3.500" {...stroke("#fff")} /></>,
  fillet: <><path d="M1 18C1 8 8 1 18 1" {...stroke(B)} /><path d="M21 1h11M1 21v11" {...stroke(G)} /></>,
  offset: <><path d="M32 5H12C-4 5-4 27 12 27h20" {...stroke(B)} /><path d="M32 11H13c-8 0-8 10 0 10h19" {...stroke(G)} /></>,
  array: <><path d="M2 2h12v12H2z" fill={G} /><path d="M18 2h12v12H18zM2 18h12v12H2zM18 18h12v12H18z" fill={B} /></>,
  solid: <><path d="M5 13h16v16H5z" {...stroke(G)} /><path d="M1 12v18M8 9l6-6h15l-6 6zM25 14l6-8v14l-6 8z" {...stroke(B)} /></>,
  stretch: <><path d="M14 17V1H1v29h13v-6" {...stroke(G)} /><path d="M17 1h5l9 29H17" {...stroke(B)} /><path d="M8 21h10" {...stroke("#fff", 2.5)} /><path d="M16 16l7 5-7 5z" fill="#fff" /></>,
  flatten: <><path d="M0 4l5-4h13l-3 4z" fill="#fff" /><path d="M0 4h14v14H0z" fill={G} /><path d="M14 4l4-4v13l-4 5z" fill="#aaa" /><path d="M18 18h14v14H18z" fill={B} /><path d="M3 22v5h5" {...stroke("#fff")} /><path d="M7 23l6 4-6 4z" fill="#fff" /></>,
  resize: <><path d="M1 14h17v16H1z" {...stroke(G)} /><path d="M1 11V1h30v29H20" {...stroke(B)} /></>,
  extend: <><path d="M1 31l12-12M19 13L31 1" {...stroke(G)} /><path d="M10 10l12 12" {...stroke(B, 2.5)} /></>,
  join: <><path d="M0 16h8M24 16h8" {...stroke(G)} /><path d="M7 10l9 6-9 6zM25 10l-9 6 9 6z" fill={B} /></>,
  order: <><path d="M0 2h20v9h-8v7H0z" fill="#bbb" /><path d="M13 14h18v14H13z" {...stroke(G)} /><path d="M16 17l8 8h-8z" fill={G} /><path d="M22 5h7v3M2 22v5h8" {...stroke("#fff")} /><path d="M25 7h8l-4 5zM-1 22h7l-3-5z" fill="#fff" /></>,
  explode: <><g transform="translate(0 -10)"><Block /></g><circle cx="26" cy="26" r="5" fill={BG} stroke={B} strokeWidth="2" /><path d="M5 20v7h6" {...stroke("#fff")} /><path d="M10 22l7 5-7 5z" fill="#fff" /></>,
  broom: <><path d="M16 0v18" {...stroke("#c8ab78")} /><path d="M13 20l3-5 3 5z" fill="#c8ab78" /><path d="M11 23h10l5 9H6z" fill={Y} /></>,
  text: <Letter x={16} y={30} size={36}>A</Letter>,
  textStyle: <><Letter x={10} y={24} size={30}>A</Letter><path d="M15 31c5-1 3-8 10-7 2 5-4 8-10 7z" fill="#c8ab78" /><path d="M25 23l6-6" {...stroke("#fff", 3)} /></>,
  textLine: <><Letter x={16} y={27} size={36} weight={400}>A</Letter><path d="M0 31h32" {...stroke(B)} /></>,
  textConv: <><path d="M0 1h22v10l-8 12H0z" fill={G} /><path d="M4 6h14M4 10h14M4 14h12" {...stroke("#666")} /><path d="M24 4h5v4" {...stroke("#fff")} /><path d="M25 7h8l-4 5z" fill="#fff" /><Letter x={23} y={32} size={24} weight={400} c="#fff">A</Letter></>,
  spell: <><Letter x={16} y={12} size={15}>ABC</Letter><path d="M6 21l6 7 12-13" {...stroke("#7fd08f", 4)} /></>,
  find: <><circle cx="13" cy="13" r="12" {...stroke("#eee")} /><Letter x={13} y={20} size={19} weight={400}>A</Letter><path d="M23 23l8 8" {...stroke("#c8ab78", 4)} /></>,
  textTable: <><path d="M0 1h19v17H0z" fill="#fff" /><path d="M4 6h2m2 0h7M4 10h2m2 0h7M4 14h2m2 0h7" {...stroke("#5e9fdc")} /><Letter x={26} y={13} size={17} c={B}>A</Letter><path d="M18 16h14v6H9v-2h9z" fill={B} /><path d="M8 25h24" {...stroke("#fff")} /></>,
  textSync: <><Letter x={7} y={13} size={17} c={B}>A</Letter><Cycle x={16} y={1} /><path d="M0 15h24v7H0z" fill={B} /><path d="M0 25h24" {...stroke("#fff")} /></>,
  pdf: <><Letter x={12} y={10} size={12}>PDF</Letter><path d="M5 14v8h5" {...stroke("#fff")} /><path d="M8 17l7 5-7 5z" fill="#fff" /><path d="M18 24l5-10 5 10z" {...stroke(B)} /></>,

  box2d: <><path d="M8 6h17M28 9v17M22 28H8M5 23V6" {...stroke("#b5b8bd")} /><path d="M25 3h5v5h-5zM3 25h5v5H3z" {...stroke("#b5b8bd")} /></>,
  box3d: <path d="M3 9h18v20H3zM3 9l6-7h20l-8 7M29 2v20l-8 7M9 2v19l-6 8M9 21h20" {...stroke("#b5b8bd")} />,
  home: <><path d="M2 2h13v13H2z" fill={B} /><path d="M17 4h13v11H17zM2 17h13v12H2zM17 17h13v12H17z" fill={G} /></>,
  plus: <path d="M16 5v22M5 16h22" {...stroke(G)} />,
  list: <><path d="M8 5h22M8 12h22M8 27h22" {...stroke(G)} /><path d="M2 18h19v4H2z" fill={G} /><path d="M22 21l4-5 4 5z" fill={G} /></>,
  gear: <Gear />,
  gearWhite: <Gear c="#fff" />,
  dock: <><path d="M14 10V3h13v26H14v-6" {...stroke("#e6e6e6", 2.5)} /><path d="M13 2h14v5H13z" fill="#e6e6e6" /><path d="M8 16h10" {...stroke("#e6e6e6")} /><path d="M4 16l7-5v10z" fill="#e6e6e6" /></>,
  editList: <><path d="M14 28H3V3h18v7" {...stroke(G, 2.5)} /><path d="M3 3h18v3H3zM7 11h11M7 16h10M7 21h7" {...stroke(G)} /><path d="M14 31l2-8 8-9 7 5-9 9z" fill={G} stroke={BG} /></>,
  layerInfo: <><Sheet y={0} x={2} /><path d="M2 17h14l8-8 2 1-9 10H2zM2 25h14v4H0z" fill={G} /><circle cx="24" cy="25" r="8" fill={G} stroke={BG} /><path d="M24 20v2m0 2v7" {...stroke(BG, 2.5)} /></>,
  clip: <><path d="M12 6h12v9h8v15H3V18h9z" fill={G} /><path d="M25 6l7 8h-7z" fill="#fff" /><path d="M1 0h12v20H1z" fill={DARK} /><path d="M9 7v9a2 2 0 0 1-4 0V5a3 3 0 0 1 7 0v11a5 5 0 0 1-10 0v-6" {...stroke(G)} /></>,
  calc: <><path d="M2 2h28v29H2z" fill={G} /><path d="M2 2h28v7H2z" fill="#999" /><path d="M7 12h4v5H7zM14 12h5v5h-5zM22 12h4v5h-4zM7 20h4v5H7zM14 20h5v5h-5zM22 20h4v5h-4z" fill="#333" /><path d="M6 28h20" {...stroke("#666")} /></>,

  lyState: <><Edge x={0} y={15} /><Edge x={0} y={25} /><path d="M1 19l7-9h24l-7 9z" fill={B} /><circle cx="16" cy="7" r="7" fill={G} stroke={BG} /></>,
  lyBrush: <><Sheet y={0} /><Edge y={12} /><Edge y={18} /><path d="M14 23l6-4 8 8-5 5z" fill={Y} stroke={BG} /><path d="M20 19l4-1 6-2 2 4-4 6z" fill="#fff" /></>,
  lyPrev: <><path d="M0 8l9-7v5c8-1 11 2 11 8-3-4-6-4-11-4v5z" fill={B} /><Edge x={4} y={13} /><Edge x={4} y={19} /><Edge x={4} y={25} /></>,
  lyIn: <><Sheet y={1} /><Edge y={13} /><Edge y={19} c={B} /><path d="M27 18l-8 9" {...stroke("#fff", 2.5)} /><path d="M14 32l2-10 7 6z" fill="#fff" /></>,
  lyOut: <><Sheet y={1} /><Edge y={13} /><Edge y={19} c={B} /><path d="M16 31l8-9" {...stroke("#fff", 2.5)} /><path d="M30 17l-2 10-7-6z" fill="#fff" /></>,
  lyFreeze: <><Sheet y={2} /><Flake c={T} x={22} y={21} r={9} /></>,
  lyOff: <><Sheet y={2} /><circle cx="23" cy="18" r="6" fill={T} /><path d="M20 24h6v4l-2 2h-3z" fill="#fff" /></>,
  lyLock: <><Sheet y={2} /><Lock c={T} x={23} y={20} /></>,
  lyUnlock: <><Sheet y={2} /><Lock c={Y} x={19} y={20} open /></>,
  lock: <Lock />,
  lockDim: <Lock c={DIM} x={9} />,
  flake: <Flake />,
  flakeDim: <Flake c={DIM} x={9} />,
  eye: <><path d="M4 16q12-14 24 0q-12 14-24 0z" fill={G} /><circle cx="16" cy="16" r="5" fill={DARK} /><circle cx="16" cy="16" r="2" fill={G} /></>,
  shade: <><path d="M8 8h16v16H8z" {...stroke(G)} /><path d="M24 8v16H8z" fill={G} /></>,
  sort: <path d="M10 8l5 6H5zM10 24l5-6H5z" fill={G} />,
  weight: <><path d="M7 9h18" {...stroke(G)} /><path d="M7 15h18" {...stroke(G, 3)} /><path d="M7 22h18" {...stroke(G, 4)} /></>,
  dashes: <><path d="M7 10h18" {...stroke(G)} strokeDasharray="2 2" /><path d="M7 16h18" {...stroke(G)} strokeDasharray="5 2" /><path d="M7 23h18" {...stroke(G)} /></>,
  newLayer: <><path d="M4 14l7-9h16l-7 9z" {...stroke(G)} /><path d="M3 20h14l10-11M3 27h14l10-12" {...stroke("#aeb1b6")} /></>,
  newLayerList: <><path d="M3 11l6-9h15l-6 9z" {...stroke(G)} /><path d="M2 17h12l10-10M2 23h9" {...stroke("#aeb1b6")} /><path d="M14 15h16v14H14z" fill={BG} stroke={G} strokeWidth="2" /><path d="M18 20h2m2 0h5m-9 5h2m2 0h5" {...stroke(G)} /></>,
  folder: <><path d="M3 6h9l3 4h11v3H10L3 23z" fill="#c9c9c9" /><path d="M4 26l8-12h17l-7 12z" fill={G} /></>,
  folderBolt: <><path d="M3 6h9l3 4h11v3H10L3 23z" fill="#c9c9c9" /><path d="M4 26l8-12h17l-7 12z" fill={G} /><path d="M19 14l-6 7h4l-2 5 7-7h-4z" fill={BG} /></>,
  minus: <path d="M8 16h16" {...stroke("#7d838f", 4)} />,
  columns: <path d="M5 8h19v15H5zM11 8v15M18 8v15" {...stroke(G)} />,
  checker: <><path d="M3 3h26v26H3z" {...stroke(G)} /><path d="M6 8h20M6 16h20M6 24h20" {...stroke(G, 4)} strokeDasharray="4 4" /><path d="M10 12h16M10 20h16" {...stroke(G, 4)} strokeDasharray="4 4" /></>,
  grid: <path d="M9 1v30M16 1v30M23 1v30M1 8h30M1 16h30M1 24h30" {...stroke(G)} />,
  dots: <path d="M4 6h26M4 16h26M4 26h26" {...stroke(G, 3)} strokeDasharray="3 8" />,
  ortho: <><path d="M1 1v30h31" {...stroke(G)} /><path d="M2 20h10v10" {...stroke(G)} /></>,
  polar: <><circle cx="14" cy="18" r="12" {...stroke(G)} /><path d="M14 18h18M14 18L27 2" {...stroke(G)} /></>,
  track: <><path d="M7 4v14M0 11h14" {...stroke(G)} /><path d="M14 22h17v7H14z" fill={G} /><path d="M12 21h4v3h-4z" fill={BG} /></>,
  lweight: <><path d="M0 5h14M14 8h18M0 13h32" {...stroke(G)} /><path d="M0 4h14v4H0zM0 13h14v3H0zM0 21h16v8H0z" fill={G} /><path d="M16 22h16" {...stroke(G)} /></>,
  cycleSel: <><path d="M8 2H3v28h5M20 2h4v14" {...stroke(G)} /><path d="M9 6h9v6H9z" {...stroke("#6cc082", 3)} /><circle cx="13" cy="20" r="4" {...stroke("#6cc082", 3)} /><path d="M20 14l12 12-5 1 3 5-3 1-3-6-4 3z" fill="#fff" /></>,
  iso: <><path d="M0 30h32M2 28L25 4" {...stroke(G)} /><path d="M10 15h7v7h-7z" fill={G} /></>,
  osnap: <><path d="M12 5h19v25H5V11" {...stroke("#fff")} /><path d="M1 1h8v8H1z" {...stroke("#fff")} /></>,
  annoOn: <><g transform="translate(-2 2) scale(.95)"><Compass /></g><circle cx="26" cy="8" r="7" fill="#fff" stroke="#6389bd" /></>,
  annoAuto: <><g transform="translate(-2 2) scale(.95)"><Compass /></g><path d="M28 2l-7 9h4l-1 6 8-9h-5z" fill={Y} /></>,
  anno: <g transform="translate(0 1)"><Compass /></g>,
  shapes: <><path d="M1 2h12v12H1z" {...stroke(G)} /><circle cx="25" cy="13" r="6" {...stroke(G)} /><path d="M14 20l6 11H8z" {...stroke(G)} /></>,
  magnify: <><circle cx="11" cy="13" r="9" {...stroke("#222")} /><path d="M17 20l8 8" {...stroke("#222", 3)} /><path d="M25 13l5 5 5-5" {...stroke("#222")} /></>,
  exportLog: <><path d="M11 9H3v22h26V9h-8M8 9v22" {...stroke(G)} /><path d="M17 22V6" {...stroke(B)} /><path d="M17 0l5 8H12z" fill={B} /></>,
  user: <><circle cx="14" cy="8" r="6" {...stroke("#e3e5e8")} /><path d="M3 31c0-20 22-20 22 0" {...stroke("#e3e5e8")} /></>,
  chevron: <path d="M8 12l8 8 8-8" {...stroke("#c3c6cb", 2.5)} />,
  app: <><path d="M2 0h22l6 8v24H2z" fill="#35507f" /><path d="M2 18h9l19 14H2z" fill="#97814b" /><path d="M2 11h28M11 0v17M8 8h6v6H8z" {...stroke("#8fa0bd", 1.5)} /></>,
  prompt: <path d="M1 6l8 5-8 5M13 22h13" {...stroke("#b3b7bf")} />,
};

function Icon({ name, size = 32, width }) {
  return (
    <svg width={width || size} height={size} viewBox={`0 0 ${width ? (32 * width) / size : 32} 32`} overflow="visible" aria-hidden="true">
      {icons[name]}
    </svg>
  );
}

const ArrowSvg = styled.svg`
  flex: none;
`;

function Arrow({ size = 12, color = G }) {
  return (
    <ArrowSvg width={size} height={size} viewBox="0 0 12 12" aria-hidden="true">
      <path d="M0 2h12L6 10z" fill={color} />
    </ArrowSvg>
  );
}

const toolbar = [
  ["file", "open*", "save", "saveAs"],
  ["undo", "redo"],
  ["print", "batch*", "pageSetup", "pageEdit"],
  ["importFile", "exportFile", "attach", "saveWeb"],
  ["zoomWin", "pan", "orbit"],
  ["props", "quick", "quickCalc", "convert", "purge", "count*"],
  ["compare", "share*", "activity*"],
];

// a trailing + marks a tool that has a flyout
const toolSets = [
  { title: "Draw", tools: ["line", "pline", "circle+", "rect+", "arc+", "spline+", "multi+", "ray+", "ellipse+", "cloud+", "xline+", "breakline"] },
  { title: "Hatch", tools: ["hatch", "hatchB+", "gradient", "boundary", "region", "wipeout"] },
  { title: "Block", tools: ["blockNew", "blockInsert", "blockEdit", "tagEdit+", "tag", "blockProps", "blockSave", "baseNew", "tagSync", "tagPlace", "blockSwap"] },
  { title: "Modify", tools: ["move", "copy", "mirror", "rotate", "scale", "trim+", "fillet+", "offset", "array+", "solid", "stretch", "flatten", "resize", "extend+", "join", "order", "explode", "broom"] },
  { title: "Text", tools: ["text", "textStyle", "textLine", "textConv", "spell", "find", "textTable", "textSync", "pdf"] },
];

const layers = [
  { name: "0", color: "#ffffff", frozen: true },
  { name: "armari...", color: "#e9401f", frozen: true },
  { name: "caixilh...", color: "#9a6bb1" },
  { name: "lajes", color: "#f19b38", frozen: true },
  { name: "paredes", color: "#f19b38", frozen: true },
  { name: "portas", color: "#1433f5", frozen: true },
  { name: "vidros", color: "#a6f84c" },
];

const styleProps = [
  { label: "Text style", value: "rd" },
  { label: "Dimension s...", value: "rd" },
  { label: "Multileader...", value: "Standard" },
  { label: "Table style", value: "Standard" },
  { label: "Annotation s...", value: "1:1" },
];

const layerTools = ["lyState", "lyBrush", "lyPrev", "lyIn", "lyOut", "lyFreeze", "lyOff", "lyLock", "lyUnlock"];
const statusTools = ["grid", "dots", "ortho", "polar", "track", "lweight", "checker", "cycleSel", "iso", "osnap!", "annoOn!", "annoAuto", "anno"];

function SelectField({ id, value, label, children, ...rest }) {
  return (
    <Field {...rest}>
      {children}
      <select id={id} aria-label={label} disabled={rest.$off} defaultValue={value}>
        <option>{value}</option>
      </select>
      <Arrow color={rest.$off ? "#7b8290" : G} />
    </Field>
  );
}

function ToolSet({ title, tools }) {
  return (
    <SetSection>
      <SetHeader>
        <Arrow size={16} color="#fff" />
        <h2>{title}</h2>
        <button aria-label={`${title} settings`}><Icon name="gearWhite" size={18} /></button>
      </SetHeader>
      <SetGrid>
        {tools.map((tool) => (
          <SetTool key={tool} $more={tool.endsWith("+")} aria-label={tool.replace("+", "")}>
            <Icon name={tool.replace("+", "")} />
          </SetTool>
        ))}
      </SetGrid>
    </SetSection>
  );
}

function Scene() {
  return (
    <Drawing viewBox="172 157 2286 1438" preserveAspectRatio="xMidYMid slice" aria-hidden="true">
      <defs>
        <linearGradient id="fade" x2="0" y2="1">
          <stop offset="0" stopColor={B} />
          <stop offset="1" stopColor={BG} />
        </linearGradient>
        <linearGradient id="red" x2="0" y2="1">
          <stop offset="0" stopColor="#8f2a28" />
          <stop offset=".4" stopColor="#cc4038" />
          <stop offset="1" stopColor="#7c1f1f" />
        </linearGradient>
      </defs>

      <g stroke="#9b62b4" strokeWidth="1" fill="#744d87">
        <path d="M905 480L1606 429l3 6v964L907 1451l-3-5z" />
        <path d="M1691 423L2392 371l2 5v966L1692 1394l-2-5z" />
        <path d="M907 487L1608 436M908 485v964M1693 430L2393 377M1694 428v964" fill="none" />
        <path d="M925 1434L1590 1385M1710 1376L2376 1328" />
      </g>
      <g fill="#6fa834">
        <path d="M924 499L1590 451v931L925 1431z" />
        <path d="M1709 443L2376 394v931L1710 1373z" />
        <path d="M925 1431L1590 1382V451M1710 1373L2376 1325V394" fill="none" stroke="#bfe08a" />
      </g>

      <path d="M1088 195v150" stroke="#8fd98b" strokeWidth="1" />
      <path d="M1036 298L1193 290" stroke="#a85a5a" strokeWidth="1.500" />
      <path d="M1079 279l28 54" stroke="#4b58a8" strokeWidth="1.500" />
      <rect x="1082" y="290" width="11" height="11" fill="#393f4c" stroke="#d5d5d5" strokeWidth="1.500" />

      <path d="M803 1340l12 12 12-12M815 1352v12" {...stroke("#4f9a3f", 1.5)} />
      <path d="M895 1421l24 25M919 1421l-24 25" {...stroke("#c04747", 1.5)} />
      <path d="M820 1465h25l-23 23h23" {...stroke("#3763cf", 1.5)} />
      <path d="M803 1372l4-6 5 6v86h-9z" fill="#3d8a2c" />
      <path d="M809 1373v84" stroke="#7cc46a" strokeWidth="2" />
      <path d="M812 1454l91-6q4 5 0 12l-89 5z" fill="url(#red)" />
      <path d="M808 1461l18 32" stroke="#2152c8" strokeWidth="10" strokeLinecap="round" />
      <path d="M823 1489l4 6" stroke="#76a5f5" strokeWidth="4" strokeLinecap="round" />

      <path
        d="M2167 382a132 55 0 1 0 264 0a132 55 0 1 0-264 0zM2199 379a100 41 0 1 1 200 0a100 41 0 1 1-200 0z"
        fill="#fff"
        fillOpacity=".17"
        fillRule="evenodd"
      />
      <g stroke="#6a6c70">
        <path d="M2244 263l91-5 24 27-102 6z" fill="#b9babd" />
        <path d="M2244 263l13 28 3 96-13-37z" fill="#a2a4a8" />
        <path d="M2257 291l102-6-3 93-96 9z" fill="#bdbfc2" />
      </g>
      <path d="M2277 309l63-4-1 58-61 5z" fill="#a9b0ba" />
      <path d="M2259 376l97-5v7l-96 9z" fill="#d3bfdc" />
      <path d="M2251 300l2 8M2252 314v4M2251 326l3 8M2252 338l2 8" stroke="#44484f" strokeWidth="3" />
      <g fontFamily="Open Sans, sans-serif" fontWeight="700" textAnchor="middle">
        <text x="2309" y="346" fontSize="26" fill="#4c525d" transform="rotate(-4 2309 337)">TOP</text>
        <text x="2298" y="279" fontSize="17" fill="#55585f" transform="rotate(177 2298 273)">BACK</text>
        <g fontFamily="DejaVu Sans, sans-serif" fill="#c3c5c8">
          <text x="2178" y="389" fontSize="30">W</text>
          <text x="2412" y="370" fontSize="26" transform="rotate(-14 2412 361)">E</text>
          <text x="2327" y="441" fontSize="32" fill="#bcd996" stroke="#6f8a4a" strokeWidth=".5">S</text>
        </g>
      </g>
    </Drawing>
  );
}

function LayersPanel() {
  const [current, setCurrent] = useState("vidros");

  return (
    <>
      <PanelHead>
        <h2>Layers</h2>
        <button aria-label="Undock layers"><Icon name="dock" /></button>
      </PanelHead>
      <LayerTools>
        {layerTools.map((name) => (
          <button key={name} aria-label={name}><Icon name={name} /></button>
        ))}
      </LayerTools>
      <LayerFields>
        <SelectField label="Current layer" value="vidros" $height={53} $pad={17} $gap={16} $inset={8}>
          <Dot />
          <Icon name="lockDim" width={18} />
          <Icon name="flakeDim" width={18} />
          <Swatch $color="#a6f84c" />
        </SelectField>
        <SelectField label="Layer state" value="Unsaved Layer State" $height={53} $pad={12} />
      </LayerFields>
      <HideList>
        <Icon name="chevron" />
        Hide Layer List
      </HideList>
      <LayerFrame>
        <TableArea>
          <LayerTable>
            <colgroup>
              <col width="62" />
              <col width="116" />
              <col width="45" />
              <col width="43" />
              <col width="93" />
              <col />
            </colgroup>
            <thead>
              <tr>
                <th aria-label="Visible"><Icon name="eye" /></th>
                <th>
                  <NameHead>
                    <Icon name="shade" size={30} />
                    N...
                    <Icon name="sort" width={20} />
                  </NameHead>
                </th>
                <th aria-label="Freeze"><Icon name="flake" /></th>
                <th aria-label="Lock"><Icon name="lock" /></th>
                <th aria-label="Lineweight"><Icon name="weight" /></th>
                <th aria-label="Linetype"><Icon name="dashes" width={24} /></th>
              </tr>
            </thead>
            <tbody>
              {layers.map((layer) => (
                <LayerRow key={layer.name} $selected={layer.name === current} onClick={() => setCurrent(layer.name)}>
                  <td><Dot $indent={28} /></td>
                  <td>
                    <Swatch $color={layer.color} />
                    <LayerName>{layer.name}</LayerName>
                  </td>
                  <td align="center">{layer.frozen && <Icon name="flake" />}</td>
                  <td />
                  <td>De...</td>
                  <td><LineSample $width="100%" $indent={15} /></td>
                </LayerRow>
              ))}
            </tbody>
          </LayerTable>
        </TableArea>
        <HScroll><span /></HScroll>
      </LayerFrame>
      <LayerActions>
        <button aria-label="New layer"><Icon name="newLayer" /></button>
        <button aria-label="New layer filter"><Icon name="newLayerList" /></button>
        <button aria-label="New group"><Icon name="folder" /></button>
        <button aria-label="New smart group"><Icon name="folderBolt" /></button>
        <button aria-label="Delete layer"><Icon name="minus" /></button>
        <button aria-label="Columns"><Icon name="columns" width={28} /><Arrow size={10} /></button>
      </LayerActions>
      <Search>
        <Icon name="magnify" size={30} width={38} />
        <input placeholder="Search for layer" aria-label="Search for layer" />
      </Search>
    </>
  );
}

function PropRow({ label, value }) {
  return (
    <>
      <PropLabel htmlFor={label}>{label}</PropLabel>
      <SelectField id={label} value={value} />
    </>
  );
}

function PropertiesPanel() {
  const [tab, setTab] = useState("My");

  return (
    <Properties>
      <PanelHead>
        <h2>Properties</h2>
        <Segmented>
          {["All", "My"].map((name) => (
            <Segment key={name} $on={name === tab} onClick={() => setTab(name)}>{name}</Segment>
          ))}
        </Segmented>
        <button aria-label="Edit list"><Icon name="editList" size={30} /></button>
        <button aria-label="Undock properties"><Icon name="dock" /></button>
      </PanelHead>
      <SpaceField>
        <SelectField label="Space" value="Model Space" $height={41} $pad={11} $off />
      </SpaceField>
      <PropScroll>
        <PropGrid>
          <PropLabel htmlFor="color">Color</PropLabel>
          <SelectField id="color" value="ByLayer" $pad={14} $gap={23}><Swatch $color="#a6f84c" /></SelectField>
          <PropLabel htmlFor="layer">Layer</PropLabel>
          <SelectField id="layer" value="vidros" />
          <PropLabel htmlFor="linetype">Linetype</PropLabel>
          <SelectField id="linetype" value="ByLa..." $pad={12} $gap={9} $end><LineSample $width="64px" /></SelectField>
          <PropLabel htmlFor="ltscale">Linetype sc...</PropLabel>
          <Field $pad={4}><input id="ltscale" defaultValue="1.000" /></Field>
          <PropLabel htmlFor="lineweight">Lineweight</PropLabel>
          <SelectField id="lineweight" value="ByLayer" />
          <PropLabel htmlFor="transparency">Transparency</PropLabel>
          <Pair>
            <SliderField $end><input id="transparency" defaultValue="0" /></SliderField>
            <SelectField label="Transparency mode" value="" $pad={10}><Icon name="checker" /></SelectField>
          </Pair>
          {styleProps.map((prop) => (
            <PropRow key={prop.label} {...prop} />
          ))}
        </PropGrid>
        <VScroll />
      </PropScroll>
    </Properties>
  );
}

export default function App() {
  return (
    <Desktop>
      <GlobalStyle />
      <Window>
        <TitleBar>
          <Lights>
            <Light $color="#ed6a5e" $edited aria-label="Close" />
            <Light $color="#f5bf4f" aria-label="Minimise" />
            <Light $color="#61c554" aria-label="Zoom" />
          </Lights>
          <Title><Icon name="app" size={30} />{"Autodesk AutoCAD 2023    t0max.dwg"}</Title>
          <User>
            <Icon name="user" size={26} width={22} />
            Mafalda Concei...
            <UserArrow><Arrow /></UserArrow>
          </User>
        </TitleBar>
        <Toolbar>
          {toolbar.map((group) => (
            <ToolGroup key={group[0]}>
              {group.map((tool) => (
                <ToolButton key={tool} aria-label={tool.replace("*", "")}>
                  <Icon name={tool.replace("*", "")} />
                  {tool.endsWith("*") && <Badge $top={1} $shift={13} />}
                </ToolButton>
              ))}
            </ToolGroup>
          ))}
        </Toolbar>

        <Body>
          <ToolSets>
            <Tabs>
              <Tab $first $active $width={56} aria-label="Drafting"><Icon name="box2d" size={30} /></Tab>
              <Tab $dark $width={69} aria-label="Modeling"><Icon name="box3d" size={30} /></Tab>
              <Tab $width={46}>»</Tab>
            </Tabs>
            <SetList>
              {toolSets.map((set) => <ToolSet key={set.title} {...set} />)}
            </SetList>
            <SetFooter>
              <button aria-label="Add tool set"><Icon name="plus" size={30} /></button>
              <button aria-label="Tool set list"><Icon name="list" size={28} /></button>
            </SetFooter>
          </ToolSets>

          <Rest>
            <Work>
              <Center>
                <FileTabs>
                  <FileTab $first $width={50} aria-label="Start"><Icon name="home" size={30} /></FileTab>
                  <FileTab $width={45} aria-label="New drawing"><Icon name="plus" size={30} /></FileTab>
                  <FileTab $active $width={258}>t0max*</FileTab>
                </FileTabs>
                <Viewport>
                  <Scene />
                  <ViewControls>
                    <button>+</button>
                    <button>Custom View</button>
                    <button>Shaded with edges (Fast)</button>
                  </ViewControls>
                  <ViewName>
                    Unnamed
                    <svg width="18" height="12" viewBox="0 0 18 12">
                      <path d="M1 1h16L9 11z" fill="#b7dc97" stroke="#6fa838" />
                    </svg>
                  </ViewName>
                  <CommandPanel>
                    <History>
                      <Log>
                        <span>Edges/shades of Gray/SKetchy/X-ray/Other] &lt;Shaded&gt;: _e</span>
                        <span>Command:</span>
                        <span>Command:</span>
                      </Log>
                      <Scroll />
                    </History>
                    <CommandLine>
                      <Icon name="prompt" width={30} />
                      <Arrow color="#a9adb4" />
                      <input placeholder="Type a command" aria-label="Command" />
                      <Arrow color="#96989c" />
                      <button aria-label="Export history"><Icon name="exportLog" size={28} /></button>
                    </CommandLine>
                  </CommandPanel>
                </Viewport>
              </Center>

              <RightPanel>
                <Tabs>
                  <Tab $active $width={103} aria-label="Layers"><Icon name="layerInfo" size={30} /></Tab>
                  <Tab $dark $width={105} aria-label="References"><Icon name="clip" size={30} /></Tab>
                  <Tab $dark $width={106} aria-label="Blocks"><Icon name="calc" size={28} /><Badge $top={-2} $shift={5} /></Tab>
                  <Tab $dark $width={110} aria-label="Empty" />
                  <Tab $width={49}>»</Tab>
                </Tabs>
                <LayersPanel />
                <PropertiesPanel />
              </RightPanel>
            </Work>

            <BottomBar>
              <LayoutTabs>
                <LayoutTab $on $width={120}>Model</LayoutTab>
                <LayoutTab $width={47} aria-label="New layout"><Icon name="plus" size={30} /></LayoutTab>
                <LayoutTab $width={113}>A3</LayoutTab>
                <LayoutTab $width={122}>Layout2</LayoutTab>
              </LayoutTabs>
              <Status>
                <Coords>{"83.006,   355.629 , 0.000"}</Coords>
                {statusTools.map((tool) => (
                  <StatusButton key={tool} $on={tool.endsWith("!")} aria-label={tool.replace("!", "")}>
                    <Icon name={tool.replace("!", "")} size={30} />
                  </StatusButton>
                ))}
                <ScaleButton>1:1 <Arrow /></ScaleButton>
                <StatusButton aria-label="Workspace"><Icon name="shapes" /></StatusButton>
                <StatusButton aria-label="Settings"><Icon name="gear" /></StatusButton>
              </Status>
            </BottomBar>
          </Rest>
        </Body>
      </Window>
      <DockEdge />
    </Desktop>
  );
}
